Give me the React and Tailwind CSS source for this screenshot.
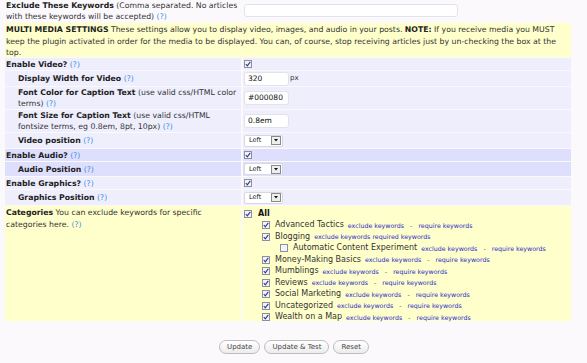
import React from "react";

const F = { fontFamily: '"DejaVu Sans", Verdana, sans-serif' };

function Help() {
  return <span className="text-[#3d8fe0]">(?)</span>;
}

function Check({ on = true }) {
  return (
    <span className="inline-flex w-[8px] h-[8px] border border-[#8d8fa0] bg-[#f4f4f8] items-center justify-center shrink-0">
      {on && (
        <svg width="6" height="6" viewBox="0 0 6 6">
          <path d="M0.8 3 L2.3 4.8 L5.3 0.8" stroke="#2b3a8c" strokeWidth="1.1" fill="none" />
        </svg>
      )}
    </span>
  );
}

function Sel() {
  return (
    <span className="inline-flex items-center w-[39px] h-[12px] bg-white border border-[#d8d8e0] rounded-[2px] pl-[4px] pr-[1px] justify-between">
      <span className="text-[6.5px] text-[#222] leading-none">Left</span>
      <span className="w-[10px] h-[9px] border border-[#8a8a8a] bg-[#eee] flex items-center justify-center">
        <svg width="4" height="3" viewBox="0 0 4 3"><path d="M0 0 H4 L2 2.5 Z" fill="#111" /></svg>
      </span>
    </span>
  );
}

function Inp({ v }) {
  return (
    <span className="inline-flex items-center w-[45px] h-[14px] bg-white border border-[#e2e2ea] rounded-[3px] pl-[3px] text-[7.5px] text-[#111]">
      {v}
    </span>
  );
}

function Row({ bg, label, children, h, indent }) {
  return (
    <div className="flex gap-[2px]">
      <div className={`w-[236px] ${bg} ${indent ? "pl-[13px]" : "pl-[1px]"} flex items-center`} style={{ height: h }}>
        <div className="leading-[11px] text-[#333]">{label}</div>
      </div>
      <div className={`flex-1 ${bg} pl-[1px] flex items-center`} style={{ height: h }}>
        {children}
      </div>
    </div>
  );
}

function Links({ noDash }) {
  return (
    <span className="text-[6.3px] text-[#2b2bc8] ml-[4px]">
      exclude keywords{noDash ? " " : <span className="text-[#555] mx-[6px]">-</span>}
      {noDash ? "required keywords" : "require keywords"}
    </span>
  );
}

function Cat({ name, level = 1, on = true, noDash }) {
  return (
    <div className={`flex items-center h-[11.5px] ${level === 2 ? "pl-[36px]" : "pl-[18px]"}`}>
      <Check on={on} />
      <span className="ml-[5px] text-[8px] text-[#333] whitespace-nowrap">{name}</span>
      <Links noDash={noDash} />
    </div>
  );
}

export default function App() {
  return (
    <div className="w-[587px] h-[363px] bg-[#fcf9fd] text-[7.75px] text-[#333] overflow-hidden" style={F}>
      <div className="pl-[5px] w-[571px] flex flex-col gap-[1px]">
        <div className="flex gap-[2px] h-[22px]">
          <div className="w-[236px] pl-[1px] pt-[0px] leading-[11px]">
            <b className="text-[#222]">Exclude These Keywords</b> (Comma separated. No articles with these keywords will be accepted) <Help />
          </div>
          <div className="flex-1 pl-[1px] pt-[4px]">
            <div className="w-[214px] h-[13px] bg-white border border-[#e2e2ea] rounded-[3px]" />
          </div>
        </div>
        <div className="bg-[#ffffcc] h-[34px] pl-[1px] pt-[1px] leading-[11.5px] pr-[2px]">
          <b className="text-[#222]">MULTI MEDIA SETTINGS</b> These settings allow you to display video, images, and audio in your posts. <b className="text-[#222]">NOTE:</b> If you receive media you MUST keep the plugin activated in order for the media to be displayed. You can, of course, stop receiving articles just by un-checking the box at the top.
        </div>
        <Row bg="bg-[#eeeefd]" h={12} label={<><b className="text-[#222]">Enable Video?</b> <Help /></>}>
          <Check />
        </Row>
        <Row bg="bg-[#eeeefd]" h={15} indent label={<><b className="text-[#222]">Display Width for Video</b> <Help /></>}>
          <Inp v="320" />
          <span className="ml-[1px] text-[7px]">px</span>
        </Row>
        <Row bg="bg-[#eeeefd]" h={22} indent label={<><b className="text-[#222]">Font Color for Caption Text</b> (use valid css/HTML color terms) <Help /></>}>
          <Inp v="#000080" />
        </Row>
        <Row bg="bg-[#eeeefd]" h={22} indent label={<><b className="text-[#222]">Font Size for Caption Text</b> (use valid css/HTML fontsize terms, eg 0.8em, 8pt, 10px) <Help /></>}>
          <Inp v="0.8em" />
        </Row>
        <Row bg="bg-[#eeeefd]" h={15} indent label={<><b className="text-[#222]">Video position</b> <Help /></>}>
          <Sel />
        </Row>
        <Row bg="bg-[#dedefd]" h={12} label={<><b className="text-[#222]">Enable Audio?</b> <Help /></>}>
          <Check />
        </Row>
        <Row bg="bg-[#dedefd]" h={14} indent label={<><b className="text-[#222]">Audio Position</b> <Help /></>}>
          <Sel />
        </Row>
        <Row bg="bg-[#eeeefd]" h={12} label={<><b className="text-[#222]">Enable Graphics?</b> <Help /></>}>
          <Check />
        </Row>
        <Row bg="bg-[#eeeefd]" h={15} indent label={<><b className="text-[#222]">Graphics Position</b> <Help /></>}>
          <Sel />
        </Row>
        <div className="flex gap-[2px] h-[115px]">
          <div className="w-[236px] bg-[#ffffcc] pl-[1px] pt-[1px] leading-[11.5px]">
            <b className="text-[#222]">Categories</b> You can exclude keywords for specific categories here. <Help />
          </div>
          <div className="flex-1 bg-[#ffffcc] pl-[1px] pt-[2px]">
            <div className="flex items-center h-[11.5px]">
              <Check />
              <b className="ml-[6px] text-[8px] text-[#111]">All</b>
            </div>
            <Cat name="Advanced Tactics" />
            <Cat name="Blogging" noDash />
            <Cat name="Automatic Content Experiment" level={2} on={false} />
            <Cat name="Money-Making Basics" />
            <Cat name="Mumblings" />
            <Cat name="Reviews" />
            <Cat name="Social Marketing" />
            <Cat name="Uncategorized" />
            <Cat name="Wealth on a Map" />
          </div>
        </div>
      </div>
      <div className="flex justify-center gap-[4px] mt-[19px] pl-[1px]">
        {["Update", "Update & Test", "Reset"].map((t) => (
          <span key={t} className="h-[14px] px-[7px] flex items-center rounded-full border border-[#bdbdbd] bg-gradient-to-b from-white to-[#ececec] text-[7px] text-[#464646]">
            {t}
          </span>
        ))}
      </div>
    </div>
  );
}
